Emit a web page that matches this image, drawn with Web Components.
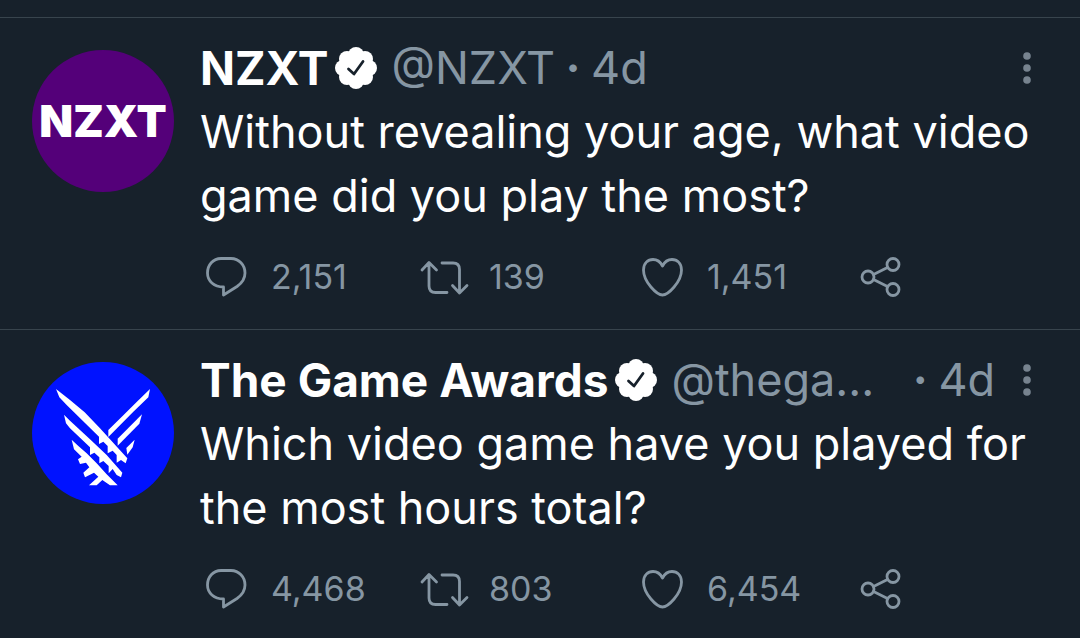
<!DOCTYPE html>
<html lang="en">
<head>
<meta charset="utf-8">
<meta name="viewport" content="width=device-width, initial-scale=1">
<title>Timeline</title>
<style>
  body { margin: 0; background: #17212b; color: #fff; font-family: Inter, "Liberation Sans", sans-serif; }
</style>
</head>
<body>
<time-line>
  <tweet-post name="NZXT" handle="@NZXT" age="4d" replies="2,151" retweets="139" likes="1,451">
    <user-avatar slot="avatar" style="--disc: #540079">NZXT</user-avatar>
    Without revealing your age, what video game did you play the most?
  </tweet-post>
  <tweet-post name="The Game Awards" handle="@thega..." clipped age="4d" replies="4,468" retweets="803" likes="6,454">
    <user-avatar slot="avatar" style="--disc: #0012ff"><wings-logo></wings-logo></user-avatar>
    Which video game have you played for the most hours total?
  </tweet-post>
</time-line>

<script>
const define = (name, html, fill) => customElements.define(name, class extends HTMLElement {
  constructor() {
    super();
    const template = document.createElement('template');
    template.innerHTML = html;
    this.attachShadow({ mode: 'open' }).append(template.content.cloneNode(true));
  }
  connectedCallback() { if (fill) fill(this, this.shadowRoot); }
});

define('time-line', `
  <style>
    :host { display: block; padding-top: 17px; }
    main { display: flex; flex-direction: column; }
  </style>
  <main><slot></slot></main>`);

define('user-avatar', `
  <style>
    :host { display: flex; align-items: center; justify-content: center; width: 142px; height: 142px;
            border-radius: 50%; background: var(--disc); color: #fff; font-size: 44px; font-weight: 900; line-height: 1; overflow: hidden; }
  </style>
  <slot></slot>`);

define('wings-logo', `
  <style>
    :host { display: block; width: 142px; height: 142px; }
    svg { display: block; }
  </style>
  <svg width="142" height="142" viewBox="-54 -54 426 426" fill="#fff" aria-hidden="true">
    <path d="M18 27 L60 60 L104 97 L150 145 L180 178 L232 235 L227 250 L213 240 L200 248 V225 L188 212 L173 220 V198 L160 185 L147 192 V170 L50 75 L28 52 Z"/>
    <path d="M42 104 L60 122 L120 178 L170 225 L217 278 L213 292 L200 285 L188 267 L176 280 V258 L160 243 L148 250 V232 L133 218 L120 225 V202 L60 145 L48 130 Z"/>
    <path d="M65 179 L85 198 L110 220 L140 250 L170 283 L203 316 H180 L157 300 L140 316 H117 L145 290 L132 278 L105 292 L100 278 L118 262 L108 248 L90 252 L84 238 L95 230 L72 208 Z"/>
    <path d="M300 27 L295 52 L250 95 L175 171 V150 L220 106 L260 66 Z"/>
    <path d="M276 103 L268 131 L203 197 V176 Z"/>
    <path d="M254 179 L248 202 L232 224 L229 204 Z"/>
  </svg>`);

define('verified-badge', `
  <style>
    :host { display: block; flex: none; width: 42px; height: 42px; }
    svg { display: block; }
  </style>
  <svg width="42" height="42" viewBox="0 0 42 42" role="img" aria-label="Verified account">
    <g fill="#fff">
      <circle cx="21" cy="21" r="16"/>
      <circle cx="21" cy="8" r="8"/><circle cx="30" cy="12" r="8"/>
      <circle cx="34" cy="21" r="8"/><circle cx="30" cy="30" r="8"/>
      <circle cx="21" cy="34" r="8"/><circle cx="12" cy="30" r="8"/>
      <circle cx="8" cy="21" r="8"/><circle cx="12" cy="12" r="8"/>
    </g>
    <path d="M13.5 22 L19 27 L28 14.5" fill="none" stroke="#17212b" stroke-width="2.8" stroke-linecap="round" stroke-linejoin="round"/>
  </svg>`);

const icons = {
  reply: '<path d="M21 6.500 H31 C39 6.500 45 13 45 21 C45 27 42 31 37 34.500 L23.500 43 V35 C14 35 7.500 29 7.500 21 C7.500 13 13 6.500 21 6.500 Z"/>',
  retweet: '<path d="M4 18 L11 10.500 L18.500 18 M11 11 V34 Q11 40.500 17.500 40.500 H29 M24 11 H35 Q41.500 11 41.500 17.500 V40 M34.500 33.500 L41.500 41 L49 33.500"/>',
  like: '<path d="M26.500 43 C21 43 7.500 30 7.500 18 C7.500 11 12 7.500 17 7.500 C21.500 7.500 24.500 10 26.500 14 C28.500 10 31.500 7.500 36 7.500 C41 7.500 45.500 11 45.500 18 C45.500 30 32 43 26.500 43 Z"/>',
  share: '<circle cx="14" cy="25" r="6"/><circle cx="39" cy="12.500" r="6"/><circle cx="39" cy="37.500" r="6"/><path d="M19.500 22.500 L33.500 15.500 M19.500 27.500 L33.500 34.500"/>'
};

define('tweet-action', `
  <style>
    :host { display: block; min-width: 0; }
    button { display: flex; align-items: center; gap: 19px; padding: 0; border: 0; background: none;
             color: #8696a3; font: inherit; font-size: 34px; line-height: 50px; white-space: nowrap; cursor: pointer; }
    svg { display: block; flex: none; fill: none; stroke: currentColor; stroke-width: 2.800; stroke-linecap: round; stroke-linejoin: round; }
  </style>
  <button type="button"><svg width="52" height="50" viewBox="0 0 52 50" aria-hidden="true"></svg><slot></slot></button>`,
  (host, root) => {
    const kind = host.getAttribute('kind');
    root.querySelector('svg').innerHTML = icons[kind];
    root.querySelector('button').setAttribute('aria-label', kind + ' ' + host.textContent);
  });

define('tweet-post', `
  <style>
    :host { display: block; }
    article { display: flex; gap: 26px; padding: 18px 8px 27px 32px; border-top: 1px solid #38444d; }
    .avatar { flex: none; padding-top: 14px; }
    .body { flex: 1; min-width: 0; }
    header { display: flex; align-items: center; padding-right: 25px; line-height: 64px; font-size: 45px; white-space: nowrap; color: #8696a3; }
    .name { color: #fff; font-size: 46px; font-weight: 700; text-decoration: none; }
    verified-badge { margin: 0 14px 0 7px; }
    .handle { min-width: 0; overflow: hidden; text-overflow: ellipsis; }
    :host([clipped]) .handle { flex: 1; }
    .dot { width: 36px; text-align: center; flex: none; font-weight: 700; }
    time { margin-right: 12px; }
    .more { display: block; width: 40px; height: 64px; margin-left: auto; padding: 0; border: 0; background: none; color: #77838f; flex: none; cursor: pointer; }
    .more svg { display: block; }
    p { margin: 0; font-size: 45px; line-height: 64px; }
    footer { display: grid; grid-template-columns: repeat(4, 1fr); padding-top: 24px; }
  </style>
  <article>
    <div class="avatar"><slot name="avatar"></slot></div>
    <div class="body">
      <header>
        <a class="name" href="#"></a><verified-badge></verified-badge><span class="handle"></span><span class="dot">·</span><time></time>
        <button class="more" type="button" aria-label="More">
          <svg width="40" height="64" viewBox="0 0 40 64" fill="currentColor"><circle cx="20" cy="20" r="3.8"/><circle cx="20" cy="32" r="3.8"/><circle cx="20" cy="44" r="3.8"/></svg>
        </button>
      </header>
      <p><slot></slot></p>
      <footer></footer>
    </div>
  </article>`,
  (host, root) => {
    const value = key => host.getAttribute(key);
    root.querySelector('.name').textContent = value('name');
    root.querySelector('.handle').textContent = value('handle');
    root.querySelector('time').textContent = value('age');
    root.querySelector('footer').innerHTML =
      `<tweet-action kind="reply">${value('replies')}</tweet-action>` +
      `<tweet-action kind="retweet">${value('retweets')}</tweet-action>` +
      `<tweet-action kind="like">${value('likes')}</tweet-action>` +
      `<tweet-action kind="share"></tweet-action>`;
  });
</script>
</body>
</html>
